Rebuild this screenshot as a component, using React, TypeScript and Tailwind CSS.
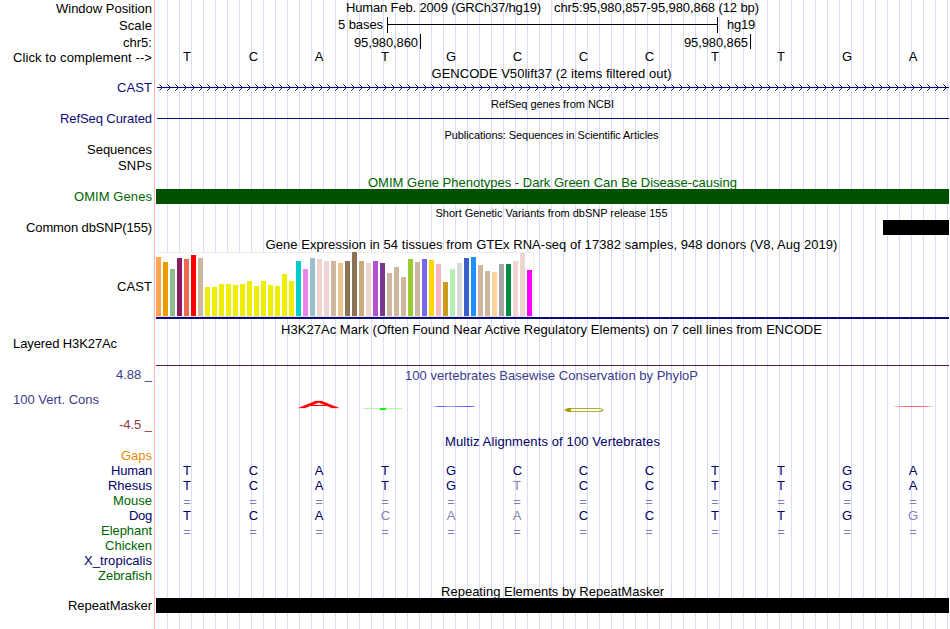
import { useLayoutEffect, useRef } from "react";
import type { ReactNode } from "react";

/** Text whose letter spacing is adjusted so that the run takes up a given width. */
function Fit({ w, className = "", children }: { w: number; className?: string; children: string }) {
  const ref = useRef<HTMLSpanElement>(null);
  useLayoutEffect(() => {
    const el = ref.current;
    if (!el) return;
    el.style.letterSpacing = "0px";
    const natural = el.getBoundingClientRect().width;
    el.style.letterSpacing = `${(w - natural) / children.length}px`;
  }, [w, children]);
  return (
    <span ref={ref} className={`inline-block shrink-0 whitespace-pre ${className}`}>
      {children}
    </span>
  );
}

function Row({ h, label, track }: { h: string; label?: ReactNode; track?: ReactNode }) {
  return (
    <div className={`flex w-full shrink-0 ${h}`}>
      <div className="flex w-[152px] shrink-0 items-start justify-end">{label}</div>
      <div className="ml-1 flex w-[793px] shrink-0 items-start justify-center">{track}</div>
    </div>
  );
}

/** A row that holds only a centred track title. */
function Title({ h, w, className = "", children }: { h: string; w: number; className?: string; children: string }) {
  return <Row h={h} track={<Fit w={w} className={`mr-[2px] ${className}`}>{children}</Fit>} />;
}

const small = "text-[11px] leading-[13px]";

function Bases({ seq, dim = "" }: { seq: string; dim?: string }) {
  return (
    <div className="-ml-[5px] flex w-[792px] shrink-0">
      {seq.split("").map((c, i) => (
        <span
          key={i}
          className={`w-[66px] text-center ${c === "C" ? "pl-px" : ""} ${c === "=" ? "pt-px text-[#8080b8]" : dim[i] === "x" ? "text-[#8585b5]" : ""}`}
        >
          {c}
        </span>
      ))}
    </div>
  );
}

const tissues: [string, number][] = [
  ["#ffa54f", 59], ["#ee9a00", 54], ["#8fbc8f", 47], ["#8b1c62", 58], ["#ee6a50", 57], ["#ff0000", 61],
  ["#cdb79e", 58], ["#eeee00", 29], ["#eeee00", 29], ["#eeee00", 32], ["#eeee00", 32], ["#eeee00", 31],
  ["#eeee00", 32], ["#eeee00", 35], ["#eeee00", 30], ["#eeee00", 35], ["#eeee00", 31], ["#eeee00", 30],
  ["#eeee00", 42], ["#eeee00", 35], ["#00cdcd", 55], ["#ee82ee", 47], ["#9ac0cd", 58], ["#eed5d2", 57],
  ["#eed5d2", 55], ["#cdb79e", 55], ["#eec591", 53], ["#8b7355", 55], ["#8b7355", 64], ["#cdaa7d", 55],
  ["#eed5d2", 53], ["#b452cd", 55], ["#7a378b", 53], ["#cdb79e", 43], ["#cdb79e", 49], ["#cdb79e", 39],
  ["#9acd32", 57], ["#cdb79e", 54], ["#7a67ee", 57], ["#ffd700", 56], ["#ffb6c1", 52], ["#cd9b1d", 34],
  ["#b4eeb4", 47], ["#d9d9d9", 53], ["#3a5fcd", 58], ["#1e90ff", 59], ["#cdb79e", 51], ["#cdb79e", 45],
  ["#ffd39b", 44], ["#a6a6a6", 52], ["#008b45", 52], ["#eed5d2", 55], ["#eed5d2", 63], ["#ff00ff", 46],
];

function Expression() {
  return (
    <div className="flex w-full flex-col items-start pt-px">
      <div className="flex h-[65px] w-[378px] items-end gap-[2px] border-t border-r border-b border-[#eeeeee] border-b-[#dddddd] bg-white">
        {tissues.map(([color, height], i) => (
          <div key={i} className="w-[5px] shrink-0" style={{ backgroundColor: color, height }} />
        ))}
      </div>
      <div className="h-[2px] w-full bg-[#0c0c78]" />
    </div>
  );
}

function GeneArrows() {
  return (
    <svg width="793" height="16" viewBox="156 80 793 16" shapeRendering="crispEdges">
      <path d="M157 87.5H949" stroke="#0c0c78" />
      {Array.from({ length: 99 }, (_, i) => (
        <g key={i} transform={`translate(${159 + i * 8} 84)`} fill="#0c0c78">
          <path d="M1 1h1v1h-1zM2 2h1v1h-1zM2 4h1v1h-1zM1 5h1v1h-1z" />
          <path d="M0 0h1v1h-1zM0 6h1v1h-1z" opacity=".55" />
        </g>
      ))}
    </svg>
  );
}

function ConservationLogo() {
  return (
    <svg width="793" height="50" viewBox="156 383 793 50">
      <defs>
        <linearGradient id="fadeBlue">
          <stop offset="0" stopColor="#4040ff" stopOpacity=".2" />
          <stop offset=".15" stopColor="#4040ff" stopOpacity=".9" />
          <stop offset=".4" stopColor="#4040ff" stopOpacity=".5" />
          <stop offset=".85" stopColor="#4040ff" stopOpacity=".9" />
          <stop offset="1" stopColor="#4040ff" stopOpacity=".5" />
        </linearGradient>
        <linearGradient id="fadeRed">
          <stop offset="0" stopColor="#ff3030" stopOpacity=".1" />
          <stop offset=".25" stopColor="#ff3030" stopOpacity=".7" />
          <stop offset=".75" stopColor="#ff3030" stopOpacity=".7" />
          <stop offset="1" stopColor="#ff3030" stopOpacity=".1" />
        </linearGradient>
      </defs>
      <path d="M298.5 408L315.5 401H321.5L339 408H332L318.7 402.6L305 408Z" fill="#ff0000" stroke="#ff0000" strokeWidth=".3" />
      <path d="M309 405.5H328" stroke="#ff0000" strokeWidth="1" />
      <rect x="364" y="408" width="38" height="1" fill="#a8ffa8" />
      <rect x="380" y="408" width="6" height="2" fill="#00ff00" />
      <rect x="433" y="406" width="42" height="1" fill="url(#fadeBlue)" />
      <path d="M569 408.5H598Q603 408.5 603 410M603 410.5Q603 411.5 598 411.5H569" fill="none" stroke="#a0a000" strokeOpacity=".85" />
      <path d="M564 410L568 408H571V412H568Z" fill="#a0a000" />
      <path d="M600 410.5H604" stroke="#a0a000" strokeOpacity=".5" />
      <rect x="893" y="406" width="41" height="1" fill="url(#fadeRed)" />
    </svg>
  );
}

const navy = "text-[#0c0c78]";
const green = "text-[#006400]";
const deep = "text-[#000064]";

const species: { name: string; w: number; color: string; seq?: string; dim?: string }[] = [
  { name: "Gaps", w: 31, color: "text-[#e68a00]" },
  { name: "Human", w: 41, color: deep, seq: "TCATGCCCTTGA" },
  { name: "Rhesus", w: 44, color: deep, seq: "TCATGTCCTTGA", dim: ".....x......" },
  { name: "Mouse", w: 39, color: green, seq: "============" },
  { name: "Dog", w: 23, color: deep, seq: "TCACAACCTTGG", dim: "...xxx.....x" },
  { name: "Elephant", w: 51, color: green, seq: "============" },
  { name: "Chicken", w: 47, color: green },
  { name: "X_tropicalis", w: 68, color: deep },
  { name: "Zebrafish", w: 54, color: green },
];

export default function App() {
  return (
    <div className="h-[629px] w-[950px] overflow-hidden bg-white font-['Liberation_Sans',Arial,sans-serif] text-[13px] leading-[15px] text-black">
      <div className="h-[629px] w-[949px] bg-[linear-gradient(to_right,#ffb0b0_1px,transparent_1px),repeating-linear-gradient(to_right,#dcdcfa_0_1px,transparent_1px_12px)] bg-[position:154px_0,167px_0] bg-no-repeat">
        <Row
          h="h-4"
          label={<Fit w={96} className="mt-px">Window Position</Fit>}
          track={
            <div className="flex gap-[13px]">
              <Fit w={195}>Human Feb. 2009 (GRCh37/hg19)</Fit>
              <Fit w={205}>chr5:95,980,857-95,980,868 (12 bp)</Fit>
            </div>
          }
        />
        <Row
          h="h-[17px]"
          label={<Fit w={33} className="mt-[2px]">Scale</Fit>}
          track={
            <div className="flex w-full items-start pt-px">
              <Fit w={45} className="ml-[182px]">5 bases</Fit>
              <div className="ml-1 flex h-4 w-[331px] items-start border-x border-black pt-[7px]">
                <div className="h-px w-full bg-black" />
              </div>
              <Fit w={28} className="ml-[9px]">hg19</Fit>
            </div>
          }
        />
        <Row
          h="h-4"
          label={<Fit w={29} className="mt-[2px]">chr5:</Fit>}
          track={
            <div className="flex w-full items-start pt-px">
              <Fit w={64} className="mt-px ml-[198px]">95,980,860</Fit>
              <div className="ml-[2px] h-[15px] w-px bg-black" />
              <Fit w={64} className="mt-px ml-[263px]">95,980,865</Fit>
              <div className="ml-[2px] h-[15px] w-px bg-black" />
            </div>
          }
        />
        <Row
          h="h-4"
          label={<Fit w={139} className="mt-px">{"Click to complement -->"}</Fit>}
          track={<Bases seq="TCATGCCCTTGA" />}
        />
        <Title h="h-[15px]" w={240} className="mt-px">GENCODE V50lift37 (2 items filtered out)</Title>
        <Row h="h-4" label={<Fit w={35} className={navy}>CAST</Fit>} track={<GeneArrows />} />
        <Row h="h-[15px]" track={<Fit w={123} className={`mt-[2px] ${small}`}>RefSeq genes from NCBI</Fit>} />
        <Row
          h="h-[15px]"
          label={<Fit w={92} className={navy}>RefSeq Curated</Fit>}
          track={<div className="mt-[7px] ml-px h-px w-[792px] bg-[#0c0c78]" />}
        />
        <Title h="h-4" w={214} className={`mt-[3px] ${small}`}>Publications: Sequences in Scientific Articles</Title>
        <Row h="h-4" label={<Fit w={65}>Sequences</Fit>} />
        <Row h="h-[15px]" label={<Fit w={34}>SNPs</Fit>} />
        <Row
          h="h-4"
          track={<Fit w={369} className={`mt-[2px] ${green}`}>OMIM Gene Phenotypes - Dark Green Can Be Disease-causing</Fit>}
        />
        <Row
          h="h-[15px]"
          label={<Fit w={78} className={green}>OMIM Genes</Fit>}
          track={<div className="h-full w-full bg-[#005000]" />}
        />
        <Title h="h-4" w={232} className={`mt-[3px] ${small}`}>Short Genetic Variants from dbSNP release 155</Title>
        <Row
          h="h-[15px]"
          label={<Fit w={126}>Common dbSNP(155)</Fit>}
          track={<div className="ml-auto h-full w-[66px] bg-black" />}
        />
        <Title h="h-4" w={572} className="mt-[2px]">
          Gene Expression in 54 tissues from GTEx RNA-seq of 17382 samples, 948 donors (V8, Aug 2019)
        </Title>
        <Row h="h-[69px]" label={<Fit w={35} className="mt-7">CAST</Fit>} track={<Expression />} />
        <Title h="h-[15px]" w={541} className="mt-[2px]">
          H3K27Ac Mark (Often Found Near Active Regulatory Elements) on 7 cell lines from ENCODE
        </Title>
        <Row
          h="h-8"
          label={<Fit w={104} className="mt-px mr-[35px]">Layered H3K27Ac</Fit>}
          track={<div className="mt-[30px] h-px w-full bg-[#502030]" />}
        />
        <Row
          h="h-[66px]"
          label={
            <div className="flex w-full flex-col items-end gap-[10px] text-[#3c3c8c]">
              <Fit w={36}>4.88 _</Fit>
              <Fit w={86} className="ml-[13px] self-start">100 Vert. Cons</Fit>
              <Fit w={33} className="text-[#8c3c3c]">-4.5 _</Fit>
            </div>
          }
          track={
            <div className="flex flex-col items-center pt-px">
              <Fit w={293} className="mr-[2px] text-[#3c3c8c]">100 vertebrates Basewise Conservation by PhyloP</Fit>
              <ConservationLogo />
            </div>
          }
        />
        <Row h="h-[15px]" track={<Fit w={215} className={`mt-px ${deep}`}>Multiz Alignments of 100 Vertebrates</Fit>} />
        {species.map((s) => (
          <Row
            key={s.name}
            h="h-[15px]"
            label={<Fit w={s.w} className={s.color}>{s.name}</Fit>}
            track={s.seq && <div className={`flex w-full justify-center ${deep}`}><Bases seq={s.seq} dim={s.dim} /></div>}
          />
        ))}
        <Row h="h-[15px]" track={<Fit w={223} className="mt-px">Repeating Elements by RepeatMasker</Fit>} />
        <Row
          h="h-[15px]"
          label={<Fit w={84}>RepeatMasker</Fit>}
          track={<div className="h-full w-full bg-black" />}
        />
      </div>
    </div>
  );
}
